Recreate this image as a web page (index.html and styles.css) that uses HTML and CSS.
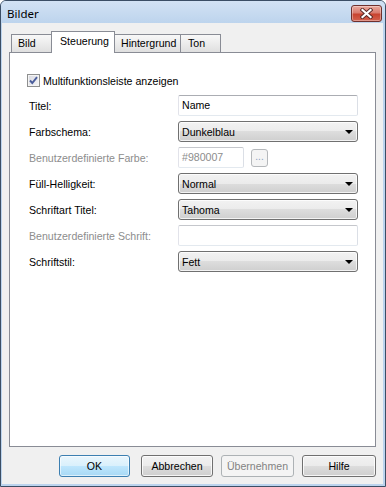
FILE: index.html
```html
<!DOCTYPE html>
<html lang="de">
<head>
<meta charset="utf-8">
<title>Bilder</title>
<link rel="stylesheet" href="styles.css">
</head>
<body>
<div class="window">
  <div class="titlebar">
    <span class="title">Bilder</span>
    <div class="close">
      <svg width="13" height="11" viewBox="0 0 13 11">
        <path d="M2.5 2 L10.5 9 M10.5 2 L2.5 9" stroke="#5a2a28" stroke-width="4" stroke-linecap="square"/>
        <path d="M2.5 2 L10.5 9 M10.5 2 L2.5 9" stroke="#ffffff" stroke-width="2.2" stroke-linecap="square"/>
      </svg>
    </div>
  </div>
  <div class="client">
    <div class="tabs">
      <div class="tab tab-bild">Bild</div>
      <div class="tab tab-active">Steuerung</div>
      <div class="tab tab-hint">Hintergrund</div>
      <div class="tab tab-ton">Ton</div>
    </div>
    <div class="panel">
      <div class="check">
        <span class="box">
          <svg width="11" height="11" viewBox="0 0 11 11"><path d="M2 5.5 L4.3 8 L9 2.2" fill="none" stroke="#4b5e9c" stroke-width="1.9"/></svg>
        </span>
        <span>Multifunktionsleiste anzeigen</span>
      </div>
      <div class="form">
        <span class="lbl">Titel:</span>
        <div class="input">Name</div>

        <span class="lbl">Farbschema:</span>
        <div class="select"><span>Dunkelblau</span><i class="arrow"></i></div>

        <span class="lbl disabled">Benutzerdefinierte Farbe:</span>
        <div class="color-row">
          <div class="input input-disabled color-input">#980007</div>
          <div class="dots">...</div>
        </div>

        <span class="lbl">Füll-Helligkeit:</span>
        <div class="select"><span>Normal</span><i class="arrow"></i></div>

        <span class="lbl">Schriftart Titel:</span>
        <div class="select"><span>Tahoma</span><i class="arrow"></i></div>

        <span class="lbl disabled">Benutzerdefinierte Schrift:</span>
        <div class="input input-disabled"></div>

        <span class="lbl">Schriftstil:</span>
        <div class="select"><span>Fett</span><i class="arrow"></i></div>
      </div>
    </div>
    <div class="buttons">
      <div class="btn btn-default btn-ok">OK</div>
      <div class="btn btn-cancel">Abbrechen</div>
      <div class="btn btn-disabled btn-apply">Übernehmen</div>
      <div class="btn btn-help">Hilfe</div>
    </div>
  </div>
</div>
</body>
</html>
```

FILE: styles.css
```css
html, body {
  margin: 0;
  padding: 0;
  background: #ffffff;
}
body {
  font-family: "Liberation Sans", Arial, sans-serif;
  font-size: 10.6px;
  color: #000;
}
.window {
  width: 386px;
  height: 487px;
  box-sizing: border-box;
  border: 1px solid #3b4e65;
  border-radius: 6px 6px 0 0;
  background: #bcd4ee;
  display: flex;
  flex-direction: column;
  overflow: hidden;
}
.titlebar {
  height: 22px;
  flex: none;
  display: flex;
  align-items: flex-start;
  background: linear-gradient(#d2e2f4, #bdd4ed);
}
.title {
  flex: 1;
  font-family: "Noto Sans", "Liberation Sans", sans-serif;
  font-size: 11.5px;
  line-height: 16px;
  padding: 5px 0 0 6px;
  color: #000;
}
.close {
  width: 31px;
  height: 17px;
  box-sizing: border-box;
  margin: 4px 3px 0 0;
  border: 1px solid #6e302d;
  border-radius: 3px;
  background: linear-gradient(#eaa99d 0%, #d97c6f 45%, #c8432f 55%, #d4624f 100%);
  box-shadow: inset 0 0 0 1px rgba(255, 255, 255, 0.35);
  display: flex;
  align-items: center;
  justify-content: center;
}
.client {
  flex: 1;
  margin: 0 2px 2px 1px;
  background: #f0f0f0;
  display: flex;
  flex-direction: column;
  padding: 8px 7px 7px;
  min-height: 0;
}
.tabs {
  display: flex;
  align-items: flex-end;
  height: 21px;
  padding-left: 2px;
  flex: none;
}
.tab {
  height: 18px;
  box-sizing: border-box;
  border: 1px solid #898c95;
  border-bottom: 0;
  background: linear-gradient(#f8f8f8, #ececec 50%, #dfdfdf);
  padding-left: 6px;
  line-height: 16px;
  white-space: nowrap;
}
.tab-bild { width: 42px; }
.tab-active {
  width: 64px;
  height: 22px;
  margin: 0 -2px -1px -2px;
  padding-left: 8px;
  line-height: 19px;
  background: #ffffff;
  position: relative;
  z-index: 1;
}
.tab-hint { width: 68px; padding-left: 7px; }
.tab-ton { width: 41px; margin-left: -1px; padding-left: 7px; }
.panel {
  flex: 1;
  border: 1px solid #898c95;
  background: #ffffff;
  padding: 21px 17px 0;
}
.check {
  display: flex;
  align-items: center;
  height: 13px;
  gap: 3px;
}
.box {
  width: 13px;
  height: 13px;
  box-sizing: border-box;
  border: 1px solid #8e8f8f;
  background: linear-gradient(135deg, #d8d9e0, #f6f6f8);
  box-shadow: inset 0 0 0 1px #f4f4f4;
  display: flex;
  align-items: center;
  justify-content: center;
}
.form {
  display: grid;
  grid-template-columns: 149px 180px;
  grid-auto-rows: 21px;
  row-gap: 5px;
  align-items: center;
  margin: 8px 0 0 2px;
}
.lbl { white-space: nowrap; }
.disabled { color: #8d8d8d; }
.input {
  height: 21px;
  box-sizing: border-box;
  border: 1px solid #abadb3;
  border-color: #abadb3 #dbdfe6 #e3e9ef #e2e3ea;
  border-radius: 2px;
  background: #fff;
  padding-left: 3px;
  line-height: 19px;
}
.input-disabled {
  color: #8d8d8d;
  border-color: #c5c7cc #dbdfe6 #e3e9ef #e2e3ea;
}
.color-row {
  display: flex;
  align-items: center;
  gap: 7px;
}
.color-input { width: 66px; }
.dots {
  width: 17px;
  height: 18px;
  box-sizing: border-box;
  border: 1px solid #b5b8bb;
  border-radius: 3px;
  background: #f4f4f4;
  color: #8aa0bf;
  font-size: 10px;
  line-height: 14px;
  text-align: center;
}
.select {
  height: 21px;
  box-sizing: border-box;
  border: 1px solid #707070;
  border-radius: 3px;
  background: linear-gradient(#f2f2f2 0%, #ebebeb 50%, #dddddd 50%, #cfcfcf 100%);
  box-shadow: inset 0 0 0 1px rgba(255, 255, 255, 0.75);
  display: flex;
  align-items: center;
  padding: 0 4px 0 3px;
}
.select span { flex: 1; }
.arrow {
  width: 0;
  height: 0;
  border-left: 4px solid transparent;
  border-right: 4px solid transparent;
  border-top: 4px solid #000;
  margin-top: 1px;
}
.buttons {
  flex: none;
  display: flex;
  justify-content: flex-end;
  gap: 8px;
  margin-top: 8px;
}
.btn {
  height: 22px;
  box-sizing: border-box;
  border: 1px solid #707070;
  border-radius: 3px;
  background: linear-gradient(#f2f2f2 0%, #ebebeb 50%, #dddddd 50%, #cfcfcf 100%);
  box-shadow: inset 0 0 0 1px rgba(255, 255, 255, 0.8);
  text-align: center;
  line-height: 20px;
}
.btn-ok { width: 71px; margin-right: 3px; }
.btn-cancel { width: 72px; }
.btn-apply { width: 73px; }
.btn-help { width: 74px; }
.btn-default {
  border-color: #3c7fb1;
  background: linear-gradient(#eaf6fd 0%, #d9f0fc 50%, #bee6fd 50%, #a7d9f5 100%);
  box-shadow: inset 0 0 0 1px rgba(255, 255, 255, 0.6);
}
.btn-disabled {
  border-color: #adb2b5;
  background: #f4f4f4;
  color: #838383;
  box-shadow: none;
}
```
